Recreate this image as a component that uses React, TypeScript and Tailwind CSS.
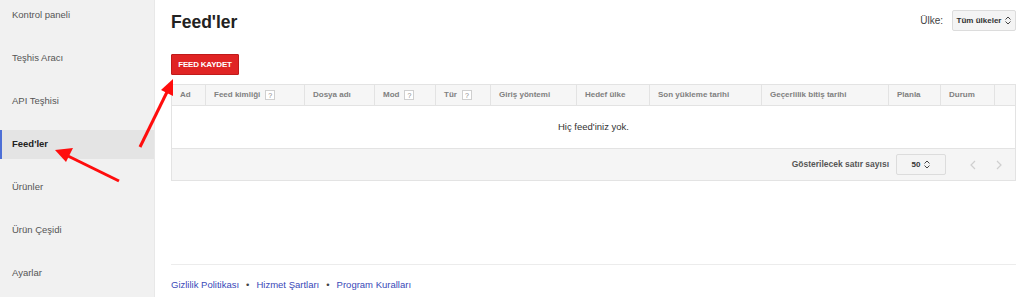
const navItems = [
  'Kontrol paneli',
  'Teşhis Aracı',
  'API Teşhisi',
  "Feed'ler",
  'Ürünler',
  'Ürün Çeşidi',
  'Ayarlar',
];

type Col = { label: string; w: number; help?: boolean };

const columns: Col[] = [
  { label: 'Ad', w: 34 },
  { label: 'Feed kimliği', w: 99, help: true },
  { label: 'Dosya adı', w: 70 },
  { label: 'Mod', w: 61, help: true },
  { label: 'Tür', w: 55, help: true },
  { label: 'Giriş yöntemi', w: 86 },
  { label: 'Hedef ülke', w: 73 },
  { label: 'Son yükleme tarihi', w: 112 },
  { label: 'Geçerlilik bitiş tarihi', w: 127 },
  { label: 'Planla', w: 52 },
  { label: 'Durum', w: 54 },
];

function UpDown() {
  return (
    <svg width="6" height="9" viewBox="0 0 6 9" className="ml-[4px]">
      <path d="M0.5 3.5 L3 1 L5.5 3.5" fill="none" stroke="#444" strokeWidth="1" />
      <path d="M0.5 5.5 L3 8 L5.5 5.5" fill="none" stroke="#444" strokeWidth="1" />
    </svg>
  );
}

function Help() {
  return (
    <span className="ml-[5px] inline-flex h-[10px] w-[10px] items-center justify-center border border-[#cfcfcf] bg-white text-[7px] font-normal leading-none text-[#888]">
      ?
    </span>
  );
}

export default function App() {
  return (
    <div
      className="relative flex h-[297px] w-[1024px] overflow-hidden bg-white text-[11px] text-[#333]"
      style={{ fontFamily: '"Liberation Sans", Arial, sans-serif' }}
    >
      {/* sidebar */}
      <div className="flex w-[155px] shrink-0 flex-col gap-[14px] border-r border-[#e8e8e8] bg-[#f1f1f1] pt-[1px] text-[9.5px]">
        {navItems.map((item) => {
          const active = item === "Feed'ler";
          return (
            <div
              key={item}
              className={
                active
                  ? 'flex h-[29px] items-center border-l-2 border-[#4d6fd6] bg-[#e4e4e4] pl-[10px] font-bold text-[#222]'
                  : 'flex h-[29px] items-center pl-[12px] text-[#555]'
              }
            >
              {item}
            </div>
          );
        })}
      </div>

      {/* main */}
      <div className="flex flex-1 flex-col pl-[16px] pr-[8px]">
        <div className="flex h-[45px] items-start justify-between">
          <h1 className="mt-[10px] text-[17.5px] font-bold leading-[24px] text-[#222]">Feed'ler</h1>
          <div className="mt-[10px] flex items-center">
            <span className="mr-[9px] text-[10px] text-[#444]">Ülke:</span>
            <div className="flex h-[21px] w-[64px] items-center justify-center rounded-[2px] border border-[#dcdcdc] bg-[#f4f4f4] text-[8px] font-bold text-[#333]">
              Tüm ülkeler
              <UpDown />
            </div>
          </div>
        </div>

        <div className="mt-[9px] flex">
          <button className="h-[21px] w-[68px] rounded-[1px] border border-[#c01a1a] bg-[#e02424] text-[8px] font-bold tracking-tight text-white">
            FEED KAYDET
          </button>
        </div>

        {/* table */}
        <div className="mt-[9px] flex flex-col border border-[#e3e3e3]">
          <div className="flex h-[21px] border-b border-[#e3e3e3] bg-[#f6f6f6]">
            {columns.map((c) => (
              <div
                key={c.label}
                className="flex shrink-0 items-center border-r border-[#e3e3e3] pl-[8px] text-[8px] font-bold text-[#808080]"
                style={{ width: c.w }}
              >
                {c.label}
                {c.help && <Help />}
              </div>
            ))}
            <div className="flex-1" />
          </div>
          <div className="flex h-[43px] items-center justify-center border-b border-[#e3e3e3] bg-white text-[9.5px] text-[#333]">
            Hiç feed'iniz yok.
          </div>
          <div className="flex h-[31px] items-center justify-end bg-[#f5f5f5]">
            <span className="mr-[7px] text-[8.5px] font-bold text-[#555]">Gösterilecek satır sayısı</span>
            <div className="flex h-[21px] w-[50px] items-center justify-center rounded-[2px] border border-[#dcdcdc] bg-[#f4f4f4] text-[8px] font-bold text-[#333]">
              50
              <UpDown />
            </div>
            <div className="ml-[24px] mr-[13px] flex items-center gap-[20px]">
              <svg width="6" height="10" viewBox="0 0 6 10">
                <path d="M5 1 L1 5 L5 9" fill="none" stroke="#cfcfcf" strokeWidth="1.2" />
              </svg>
              <svg width="6" height="10" viewBox="0 0 6 10">
                <path d="M1 1 L5 5 L1 9" fill="none" stroke="#cfcfcf" strokeWidth="1.2" />
              </svg>
            </div>
          </div>
        </div>

        <div className="flex-1" />

        <div className="border-t border-[#ececec] pb-[5px] pt-[13px]">
          <div className="flex items-center text-[9.5px] text-[#3949b8]">
            <span>Gizlilik Politikası</span>
            <span className="mx-[7px] text-[#444]">•</span>
            <span>Hizmet Şartları</span>
            <span className="mx-[7px] text-[#444]">•</span>
            <span>Program Kuralları</span>
          </div>
        </div>
      </div>

      {/* annotation arrows */}
      <svg className="pointer-events-none absolute left-0 top-0" width="1024" height="297">
        <line x1="119" y1="181" x2="68" y2="156" stroke="#ff0d0d" strokeWidth="3" />
        <polygon points="55,150 73,148 66,162" fill="#ff0d0d" />
        <line x1="140" y1="147" x2="167" y2="92" stroke="#ff0d0d" strokeWidth="3" />
        <polygon points="173,79 173,96 161,90" fill="#ff0d0d" />
      </svg>
    </div>
  );
}
